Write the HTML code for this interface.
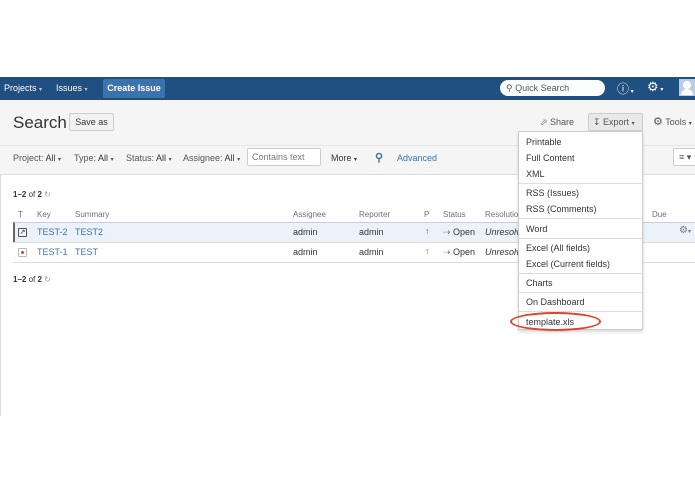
<!DOCTYPE html>
<html><head><meta charset="utf-8"><style>
*{margin:0;padding:0;box-sizing:border-box}
body{width:695px;height:494px;background:#fff;font-family:"Liberation Sans",sans-serif;font-size:9px;color:#333;position:relative;overflow:hidden}
.a{position:absolute;white-space:nowrap}
.nav{left:0;top:77px;width:695px;height:23px;background:#205081}
.w{color:#fff}
.lnk{color:#3b73af}
.mi{position:absolute;left:7px;font-size:9px;color:#333}
.sep{position:absolute;left:0;width:125px;height:1px;background:#ddd}
.hd{color:#707070;font-size:8px}
</style></head><body>
<div class="a nav"></div>
<div class="a w" style="left:4px;top:83px">Projects <span style="font-size:6px;opacity:.7">▾</span></div>
<div class="a w" style="left:56px;top:83px">Issues <span style="font-size:6px;opacity:.7">▾</span></div>
<div class="a w" style="left:103px;top:79px;width:62px;height:19px;background:#3b73af;border-radius:2px;font-weight:bold;text-align:center;line-height:19px">Create Issue</div>
<div class="a" style="left:500px;top:80px;width:105px;height:16px;background:#fff;border-radius:8px;color:#555;line-height:16px;padding-left:6px">&#9906; Quick Search</div>
<div class="a w" style="left:617px;top:80px;font-size:12px">&#9432;<span style="font-size:6px"> ▾</span></div>
<div class="a w" style="left:647px;top:79px;font-size:13px">&#9881;<span style="font-size:6px"> ▾</span></div>
<div class="a" style="left:679px;top:79px;width:16px;height:17px;background:#b9cde4"><div style="position:absolute;left:4px;top:2px;width:8px;height:8px;border-radius:50%;background:#fff"></div><div style="position:absolute;left:2px;top:10px;width:12px;height:6px;border-radius:6px 6px 0 0;background:#fff"></div></div>
<div class="a" style="left:0;top:100px;width:695px;height:75px;background:#f5f5f5;border-bottom:1px solid #ddd"></div>
<div class="a" style="left:0;top:145px;width:695px;height:1px;background:#e5e5e5"></div>
<div class="a" style="left:13px;top:113px;font-size:17px;color:#333">Search</div>
<div class="a" style="left:69px;top:113px;width:45px;height:18px;background:#f2f2f2;border:1px solid #ccc;border-radius:2px;text-align:center;line-height:16px">Save as</div>
<div class="a" style="left:540px;top:117px;color:#555">&#11008; Share</div>
<div class="a" style="left:588px;top:113px;width:55px;height:18px;background:#e9e9e9;border:1px solid #ccc;border-radius:2px;line-height:16px;padding-left:4px;color:#555">&#8615; Export <span style="font-size:6px">▾</span></div>
<div class="a" style="left:653px;top:115px;color:#555"><span style="font-size:11px">&#9881;</span> Tools <span style="font-size:6px">▾</span></div>
<div class="a" style="left:13px;top:153px;color:#555">Project: <span style="color:#333">All</span> <span style="font-size:6px">▾</span></div>
<div class="a" style="left:74px;top:153px;color:#555">Type: <span style="color:#333">All</span> <span style="font-size:6px">▾</span></div>
<div class="a" style="left:126px;top:153px;color:#555">Status: <span style="color:#333">All</span> <span style="font-size:6px">▾</span></div>
<div class="a" style="left:183px;top:153px;color:#555">Assignee: <span style="color:#333">All</span> <span style="font-size:6px">▾</span></div>
<div class="a" style="left:247px;top:148px;width:74px;height:18px;background:#fff;border:1px solid #ccc;border-radius:2px;color:#777;line-height:16px;padding-left:4px">Contains text</div>
<div class="a" style="left:331px;top:153px">More <span style="font-size:6px">▾</span></div>
<div class="a lnk" style="left:375px;top:151px;font-size:11px;font-weight:bold">&#9906;</div>
<div class="a lnk" style="left:397px;top:153px">Advanced</div>
<div class="a" style="left:673px;top:148px;width:24px;height:18px;background:#fff;border:1px solid #ccc;border-radius:2px;line-height:16px;padding-left:5px;color:#555">&#8801; ▾</div>
<div class="a" style="left:0;top:175px;width:1px;height:241px;background:#ddd"></div>
<div class="a" style="left:13px;top:190px;font-size:8px"><b>1–2</b> of <b>2</b> <span style="color:#999">&#8635;</span></div>
<div class="a hd" style="left:18px;top:210px">T</div>
<div class="a hd" style="left:37px;top:210px">Key</div>
<div class="a hd" style="left:75px;top:210px">Summary</div>
<div class="a hd" style="left:293px;top:210px">Assignee</div>
<div class="a hd" style="left:359px;top:210px">Reporter</div>
<div class="a hd" style="left:424px;top:210px">P</div>
<div class="a hd" style="left:443px;top:210px">Status</div>
<div class="a hd" style="left:485px;top:210px">Resolution</div>
<div class="a hd" style="left:652px;top:210px">Due</div>
<div class="a" style="left:13px;top:222px;width:682px;height:20px;background:#ebf2f9;border-top:1px solid #ccd;border-left:2px solid #666"></div>
<div class="a" style="left:13px;top:242px;width:682px;height:1px;background:#ddd"></div>
<div class="a" style="left:13px;top:262px;width:682px;height:1px;background:#ddd"></div>
<div class="a" style="left:18px;top:228px;width:9px;height:9px;border:1px solid #555;border-radius:1px;font-size:7px;line-height:7px;text-align:center">&#8599;</div>
<div class="a" style="left:18px;top:248px;width:9px;height:9px;border:1px solid #bbb;border-radius:1px"><div style="margin:2px;width:3px;height:3px;border-radius:50%;background:#d04437"></div></div>
<div class="a lnk" style="left:37px;top:227px">TEST-2</div><div class="a lnk" style="left:75px;top:227px">TEST2</div>
<div class="a lnk" style="left:37px;top:247px">TEST-1</div><div class="a lnk" style="left:75px;top:247px">TEST</div>
<div class="a" style="left:293px;top:227px">admin</div><div class="a" style="left:359px;top:227px">admin</div>
<div class="a" style="left:293px;top:247px">admin</div><div class="a" style="left:359px;top:247px">admin</div>
<div class="a" style="left:425px;top:226px;color:#d04437">&#8593;</div><div class="a" style="left:425px;top:246px;color:#d04437">&#8593;</div>
<div class="a" style="left:443px;top:227px"><span style="color:#777">&#8674;</span> Open</div><div class="a" style="left:443px;top:247px"><span style="color:#777">&#8674;</span> Open</div>
<div class="a" style="left:485px;top:227px;font-style:italic">Unresolv</div><div class="a" style="left:485px;top:247px;font-style:italic">Unresolv</div>
<div class="a" style="left:679px;top:225px;color:#777;font-size:10px">&#9881;<span style="font-size:6px">▾</span></div>
<div class="a" style="left:13px;top:275px;font-size:8px"><b>1–2</b> of <b>2</b> <span style="color:#999">&#8635;</span></div>
<div class="a" style="left:518px;top:131px;width:125px;height:199px;background:#fff;border:1px solid #ccc;box-shadow:0 2px 3px rgba(0,0,0,.15)">
<div class="mi" style="top:5px">Printable</div>
<div class="mi" style="top:21px">Full Content</div>
<div class="mi" style="top:37px">XML</div>
<div class="sep" style="top:51px"></div>
<div class="mi" style="top:56px">RSS (Issues)</div>
<div class="mi" style="top:72px">RSS (Comments)</div>
<div class="sep" style="top:86px"></div>
<div class="mi" style="top:92px">Word</div>
<div class="sep" style="top:106px"></div>
<div class="mi" style="top:111px">Excel (All fields)</div>
<div class="mi" style="top:127px">Excel (Current fields)</div>
<div class="sep" style="top:141px"></div>
<div class="mi" style="top:146px">Charts</div>
<div class="sep" style="top:160px"></div>
<div class="mi" style="top:165px">On Dashboard</div>
<div class="sep" style="top:179px"></div>
<div class="mi" style="top:185px">template.xls</div>
</div>
<div class="a" style="left:510px;top:312px;width:91px;height:19px;border:2px solid #e0442a;border-radius:50%"></div>
</body></html>
